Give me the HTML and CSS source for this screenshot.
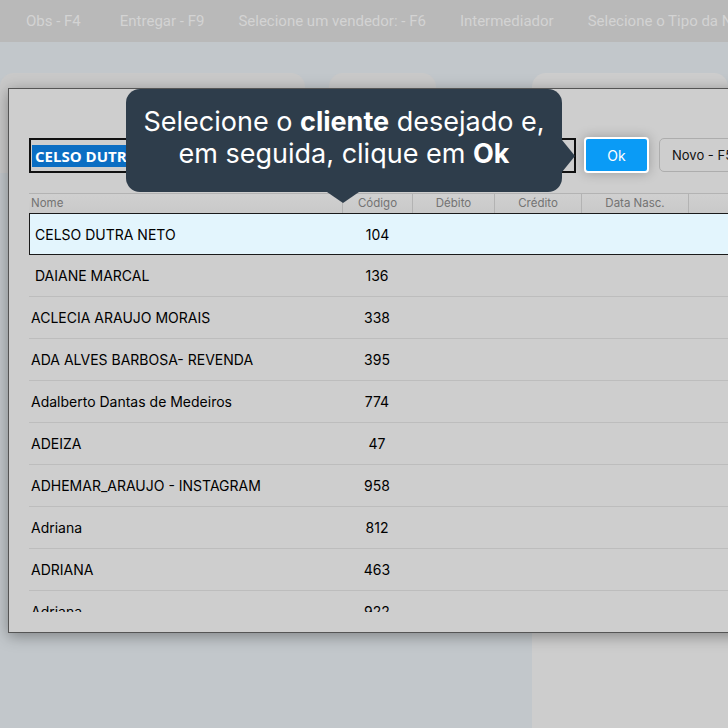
FILE: index.html
```html
<!DOCTYPE html>
<html lang="pt-BR">
<head>
<meta charset="utf-8">
<title>Selecionar cliente</title>
<link rel="stylesheet" href="styles.css">
</head>
<body>
<div class="page">
  <header class="topbar">
    <span class="menu-item menu-first">Obs - F4</span>
    <span class="menu-item">Entregar - F9</span>
    <span class="menu-item">Selecione um vendedor: - F6</span>
    <span class="menu-item">Intermediador</span>
    <span class="menu-item">Selecione o Tipo da Nota</span>
  </header>
  <div class="cards">
    <div class="card card-a"></div>
    <div class="card card-b"></div>
    <div class="card card-c"></div>
  </div>
</div>

<div class="modal">
  <div class="toolbar">
    <div class="search"><span class="sel">CELSO DUTRA NETO</span></div>
    <button class="btn-ok">Ok</button>
    <button class="btn-novo">Novo - F5</button>
  </div>
  <div class="table">
    <div class="thead">
      <div class="th th-name">Nome</div>
      <div class="th">Código</div>
      <div class="th">Débito</div>
      <div class="th">Crédito</div>
      <div class="th">Data Nasc.</div>
      <div class="th"></div>
    </div>
    <div class="tbody">
      <div class="row row-selected"><div class="td name">CELSO DUTRA NETO</div><div class="td code">104</div></div>
      <div class="row"><div class="td name">&nbsp;DAIANE MARCAL</div><div class="td code">136</div></div>
      <div class="row"><div class="td name">ACLECIA ARAUJO MORAIS</div><div class="td code">338</div></div>
      <div class="row"><div class="td name">ADA ALVES BARBOSA- REVENDA</div><div class="td code">395</div></div>
      <div class="row"><div class="td name">Adalberto Dantas de Medeiros</div><div class="td code">774</div></div>
      <div class="row"><div class="td name">ADEIZA</div><div class="td code">47</div></div>
      <div class="row"><div class="td name">ADHEMAR_ARAUJO - INSTAGRAM</div><div class="td code">958</div></div>
      <div class="row"><div class="td name">Adriana</div><div class="td code">812</div></div>
      <div class="row"><div class="td name">ADRIANA</div><div class="td code">463</div></div>
      <div class="row"><div class="td name">Adriana</div><div class="td code">922</div></div>
    </div>
  </div>
</div>

<div class="tip">
  <p class="tip-line">Selecione o <b>cliente</b> desejado e,</p>
  <p class="tip-line">em seguida, clique em <b>Ok</b></p>
</div>
</body>
</html>
```

FILE: styles.css
```css
* { box-sizing: border-box; }
html, body { margin: 0; padding: 0; }
body {
  width: 728px;
  height: 728px;
  overflow: hidden;
  background: #c2c7cb;
  font-family: Inter, "Noto Sans", sans-serif;
  position: relative;
}
.page { height: 728px; display: flex; flex-direction: column; }
.topbar {
  height: 42px;
  background: #b9b9b9;
  display: flex;
  align-items: center;
  gap: 34px;
  padding-left: 26px;
  white-space: nowrap;
  overflow: hidden;
  flex: none;
}
.menu-item {
  font-family: Roboto, "Liberation Sans", sans-serif;
  font-size: 15px;
  color: #d3d3d3;
}
.menu-first { margin-right: 5px; }
.cards {
  flex: 1;
  display: flex;
  align-items: flex-start;
  margin-top: 31px;
}
.card {
  background: #c9c9c9;
  border-radius: 14px 14px 0 0;
}
.card-a { width: 305px; height: 100px; }
.card-b { width: 107px; height: 60px; margin-left: 24px; }
.card-c { flex: 1; align-self: stretch; margin-left: 96px; background: #cdcdcd; }

.modal {
  position: absolute;
  left: 8px;
  top: 88px;
  width: 760px;
  height: 545px;
  background: #cecece;
  border: 1px solid #555;
  box-shadow: 0 3px 14px rgba(0, 0, 0, 0.35);
  padding: 48px 0 0 20px;
}
.toolbar {
  display: flex;
  align-items: center;
  height: 36px;
}
.search {
  width: 547px;
  height: 35px;
  border: 2px solid #111;
  padding: 5px 0 0 1px;
  overflow: hidden;
  white-space: nowrap;
}
.sel {
  display: inline-block;
  background: #0b6ec3;
  color: #fff;
  font-family: "Open Sans", sans-serif;
  font-weight: 700;
  font-size: 15px;
  line-height: 22px;
  padding: 0 3px;
}
.btn-ok {
  margin-left: 8px;
  width: 65px;
  height: 36px;
  background: #0a9bf6;
  color: #fff;
  border: 2px solid #fff;
  border-radius: 4px;
  font-family: Inter, sans-serif;
  font-size: 14px;
  box-shadow: 0 0 12px rgba(0, 0, 0, 0.25);
  padding: 0;
}
.btn-novo {
  margin-left: 10px;
  width: 92px;
  height: 34px;
  background: #cecece;
  border: 1px solid #adadad;
  border-radius: 5px;
  color: #111;
  font-family: Inter, sans-serif;
  font-size: 13px;
  text-align: left;
  padding: 0 0 0 12px;
  white-space: nowrap;
  flex: none;
}
.table { margin-top: 20px; }
.thead, .row {
  display: grid;
  grid-template-columns: 313px 70px 82px 87px 107px 1fr;
}
.thead {
  height: 20px;
  border-top: 1px solid #b3b3b3;
  background: linear-gradient(#d0d0d0, #c9c9c9);
}
.th {
  font-size: 11.5px;
  color: #737373;
  text-align: center;
  line-height: 19px;
  border-left: 1px solid #b3b3b3;
}
.th-name { text-align: left; padding-left: 2px; border-left: none; }
.tbody {
  height: 399px;
  overflow: hidden;
}
.row {
  height: 42px;
  border-bottom: 1px solid #bdbdbd;
  align-items: center;
  font-size: 14px;
  color: #000;
}
.row-selected {
  border: 1px solid #1a1a1a;
  background: #e3f5fd;
}
.td.name { padding-left: 2px; white-space: nowrap; }
.row-selected .td.name { padding-left: 5px; }
.td.code { text-align: center; }
.row-selected .td.code { padding-right: 1px; }

.tip {
  position: absolute;
  left: 126px;
  top: 89px;
  width: 436px;
  height: 103px;
  background: #2e3d4b;
  border-radius: 14px;
  color: #fff;
  display: flex;
  flex-direction: column;
  justify-content: center;
  align-items: center;
  padding-bottom: 6px;
}
.tip::after {
  content: "";
  position: absolute;
  left: 201px;
  top: 100%;
  border-left: 16px solid transparent;
  border-right: 16px solid transparent;
  border-top: 11px solid #2e3d4b;
}
.tip::before {
  content: "";
  position: absolute;
  left: 100%;
  top: 51px;
  border-top: 16px solid transparent;
  border-bottom: 16px solid transparent;
  border-left: 13px solid #2e3d4b;
}
.tip-line {
  margin: 0;
  font-size: 27px;
  line-height: 32px;
  white-space: nowrap;
}
.tip-line b { font-weight: 700; }
```
